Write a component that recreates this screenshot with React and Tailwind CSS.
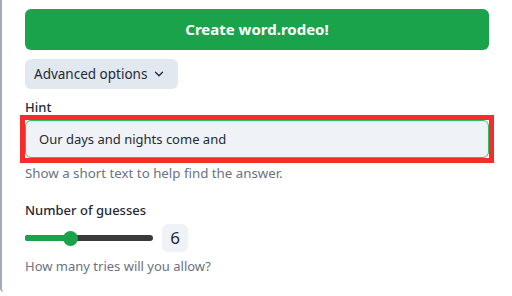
import React from 'react';
import { ChevronDown } from 'lucide-react';

const App = () => {
  return (
    <div className="w-[512px] h-[296px] bg-white overflow-hidden" style={{ fontFamily: '"Noto Sans", sans-serif' }}>
      <div className="h-[292px] border-l-2 border-[#a3abb8] rounded-bl-sm pl-[23px] pr-[23px] pt-[9px]">
        <button className="w-full h-[41px] rounded-md bg-[#1aa34a] text-white font-bold text-[15px]">
          Create word.rodeo!
        </button>

        <button className="mt-[9px] h-[30px] pl-[9px] pr-[12px] rounded-md bg-[#e2e8f0] text-[#1f2937] text-[13.5px] flex items-center gap-[5px]">
          Advanced options
          <ChevronDown size={14} strokeWidth={2.25} />
        </button>

        <div className="mt-[8px] text-[13px] font-medium text-[#1f2937] leading-[20px]">Hint</div>
        <div className="mt-[-2px] -mx-[5px] border-[5px] border-[#f52c2c]">
          <input
            className="block w-full h-[38px] px-[13px] rounded-md border border-[#22c55e] bg-[#eff3f8] text-[13px] text-[#1f2937] outline-none"
            defaultValue="Our days and nights come and"
          />
        </div>
        <div className="mt-[1px] text-[13.3px] text-[#6b7280] leading-[18px]">
          Show a short text to help find the answer.
        </div>

        <div className="mt-[18px] text-[13px] font-medium text-[#1f2937] leading-[20px]">Number of guesses</div>
        <div className="mt-[4px] flex items-center gap-[9px]">
          <div className="relative w-[128px] h-[14px] flex items-center">
            <div className="w-full h-[6px] rounded-full bg-[#3a3a3a]" />
            <div className="absolute left-0 h-[6px] w-[46px] rounded-full bg-[#1aa34a]" />
            <div className="absolute left-[38px] w-[15px] h-[15px] rounded-full bg-[#1aa34a]" />
          </div>
          <div className="w-[26px] h-[28px] rounded-md bg-[#eff3f8] flex items-center justify-center text-[17px] text-[#1f2937]">
            6
          </div>
        </div>
        <div className="mt-[5px] text-[13px] text-[#6b7280] leading-[18px]">How many tries will you allow?</div>
      </div>
    </div>
  );
};

export default App;
